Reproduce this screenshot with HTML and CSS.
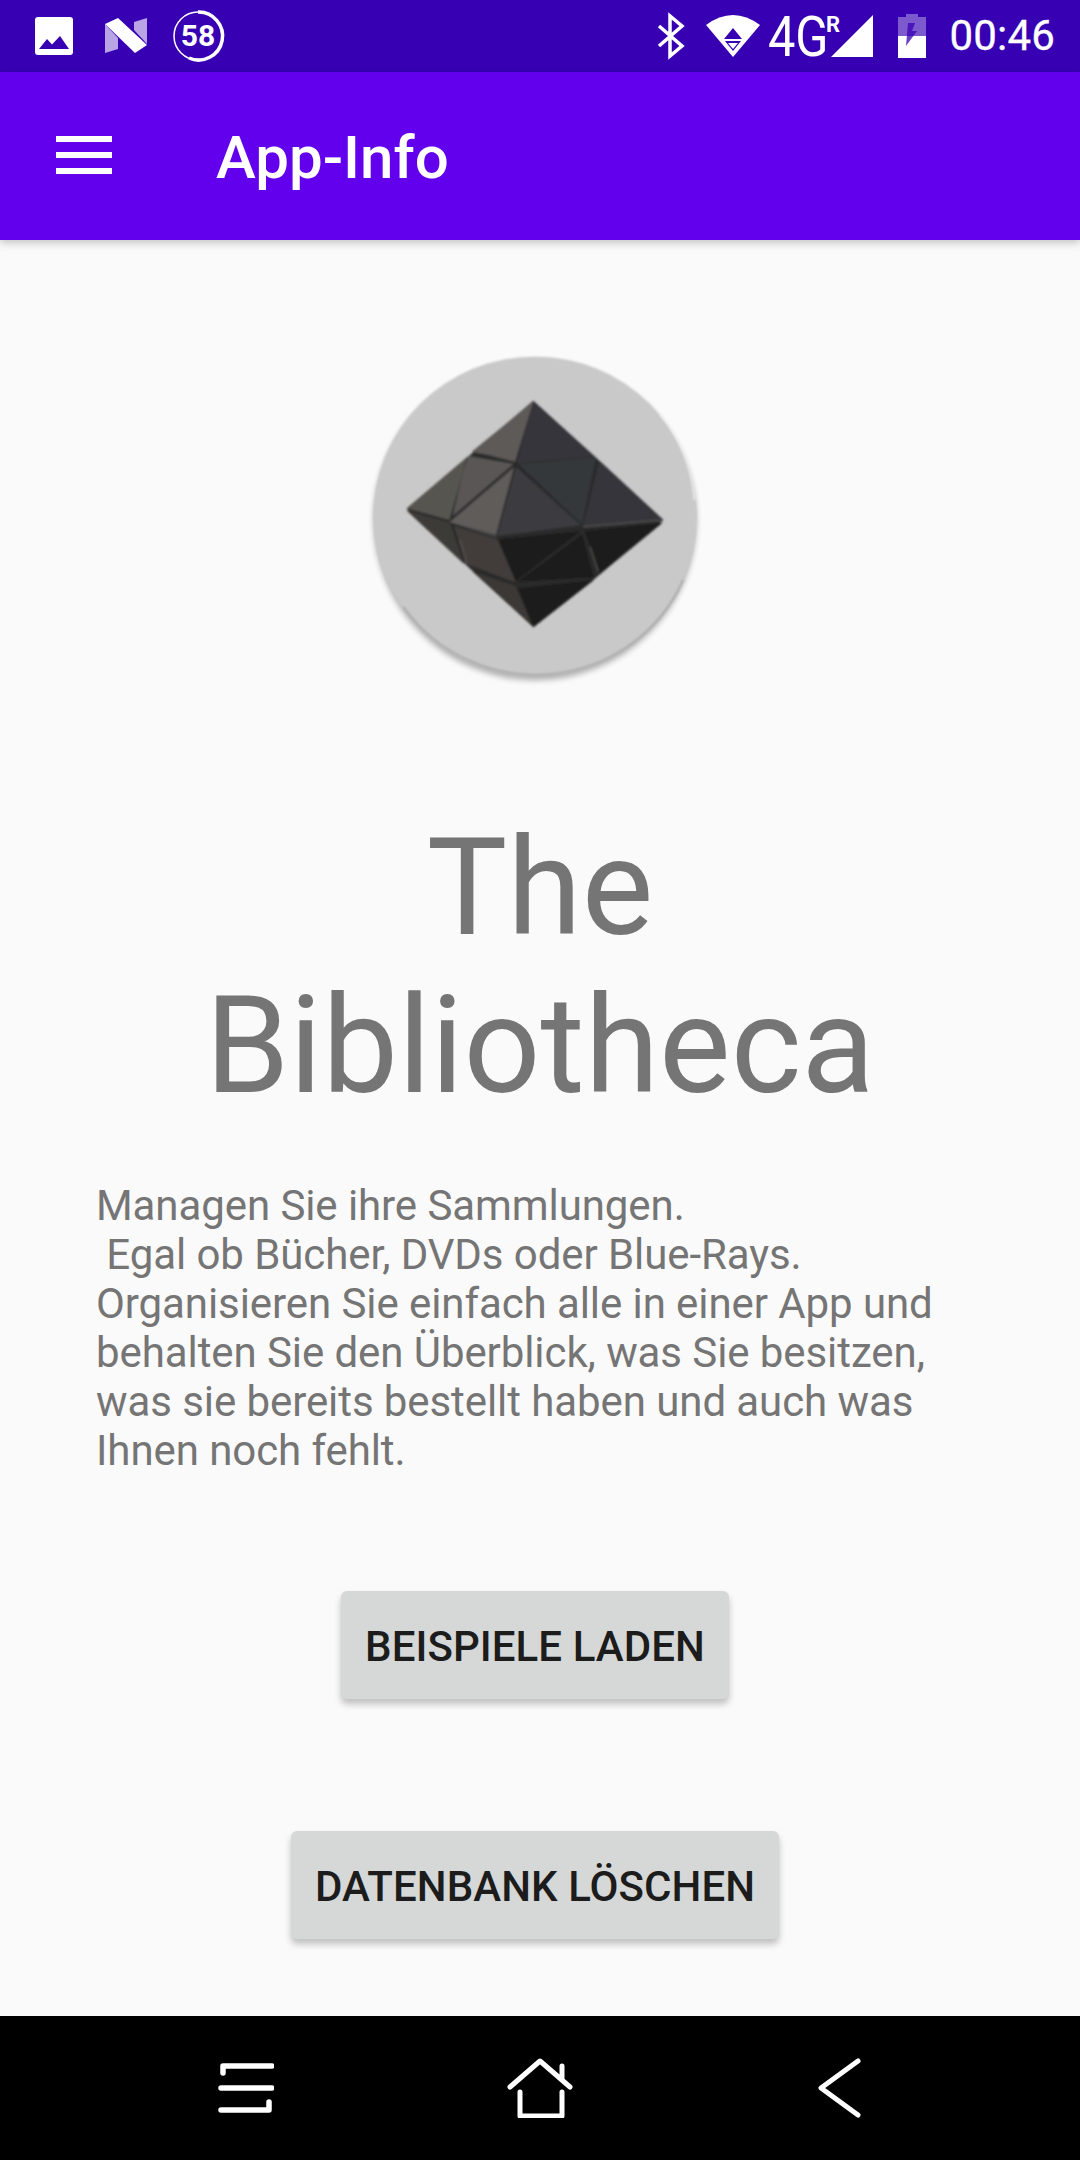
FILE: index.html
```html
<!DOCTYPE html>
<html lang="de">
<head>
<meta charset="utf-8">
<title>App-Info</title>
<link rel="stylesheet" href="styles.css">
</head>
<body>
<div class="screen">
  <header class="status">
    <div class="status-left">
      <svg class="si-image" viewBox="0 0 38 38"><rect width="38" height="38" rx="3" fill="#fff"/><path d="M4 32 L12 22 L17 27.5 L25 19 L34 32 Z" fill="#3700b3"/></svg>
      <svg class="si-n" viewBox="0 0 42 36"><path d="M0 6 L13 20 V31 L0 35 Z" fill="#b9a4e6"/><path d="M42 0 V26 L29 12 V4 Z" fill="#b9a4e6"/><path d="M0 6 L13 0 L42 27 L30 35 Z" fill="#fff"/></svg>
      <svg class="si-badge" viewBox="0 0 52 52"><circle cx="26" cy="26" r="24" fill="none" stroke="#fff" stroke-width="1.5"/><path d="M26 2 A24 24 0 1 1 17 48" fill="none" stroke="#fff" stroke-width="3.5"/><text x="26" y="36" text-anchor="middle" class="badge-text">58</text></svg>
    </div>
    <div class="status-right">
      <svg class="si-bt" viewBox="0 0 28 44"><path d="M2 12 L25 32 L13 42 V2 L25 12 L2 32" fill="none" stroke="#fff" stroke-width="3.5"/></svg>
      <svg class="si-wifi" viewBox="0 0 54 42"><path d="M0 10 Q27 -10 54 10 L27 42 Z" fill="#fff"/><path d="M27 13 L36 24 H18 Z M19 26 H35 L27 36 Z" fill="#3700b3"/><path d="M22 28 H32 L27 34 Z" fill="#fff"/></svg>
      <svg class="si-net" viewBox="0 0 105 44"><text transform="translate(0 42) scale(.87 1)" class="net-text">4G</text><text x="58" y="18" class="net-r">R</text><path d="M105 1 V43 H63 Z" fill="#fff"/></svg>
      <svg class="si-batt" viewBox="0 0 28 44"><path d="M8 0 H20 V3 H28 V44 H0 V3 H8 Z" fill="#fff" opacity=".35"/><path d="M0 22 H28 V44 H0 Z" fill="#fff"/><path d="M17 9 H10 L8 32 L19 17 H14 Z" fill="#3700b3" opacity=".75"/></svg>
      <span class="clock">00:46</span>
    </div>
  </header>

  <div class="appbar">
    <div class="burger"><span></span><span></span><span></span></div>
    <h1 class="appbar-title">App-Info</h1>
  </div>

  <main class="content">
    <svg class="logo" viewBox="0 0 1110 1050">
      <defs>
        <filter id="soft" x="-10%" y="-10%" width="120%" height="120%"><feGaussianBlur stdDeviation="3.5"/></filter>
        <filter id="shadow" x="-10%" y="-10%" width="120%" height="120%"><feGaussianBlur stdDeviation="10"/></filter>
      </defs>
      <ellipse cx="555" cy="542" rx="483" ry="478" fill="#000" opacity=".32" filter="url(#shadow)"/>
      <ellipse cx="555" cy="530" rx="485" ry="480" fill="#c9c9c9" filter="url(#soft)"/>
      <path d="M160 800 A485 480 0 0 0 1000 720" fill="none" stroke="#8a8a8a" stroke-width="5" opacity=".55" filter="url(#soft)"/>
      <path d="M930 220 A485 480 0 0 1 1034 480" fill="none" stroke="#f4f4f4" stroke-width="6" opacity=".8" filter="url(#soft)"/>
      <g filter="url(#soft)">
        <polygon points="550,182 735,350 940,540 730,720 550,862 370,695 170,508 360,345" fill="#2b2b2b"/>
        <polygon points="550,185 365,335 415,345 495,365" fill="#5d5a58"/>
        <polygon points="550,185 735,350 500,370" fill="#35363a"/>
        <polygon points="352,350 170,505 298,540 330,430" fill="#57544f"/>
        <polygon points="356,348 490,372 308,528 338,400" fill="#5a5755"/>
        <polygon points="492,382 438,585 300,545" fill="#5f5c5a"/>
        <polygon points="498,380 692,556 442,588" fill="#3a3b3f"/>
        <polygon points="505,372 738,352 696,552" fill="#36373b"/>
        <polygon points="748,362 940,540 698,562" fill="#34353a"/>
        <polygon points="170,512 342,672 300,548" fill="#3d3a37"/>
        <polygon points="312,558 442,598 497,727 350,672" fill="#423e3b"/>
        <polygon points="368,695 497,738 548,858" fill="#3a3734"/>
        <polygon points="550,862 732,720 503,745" fill="#1f1f1f"/>
        <polygon points="445,598 692,573 498,722" fill="#1c1c1c"/>
        <polygon points="503,725 697,583 732,712" fill="#1e1e1e"/>
        <polygon points="703,573 938,548 750,702" fill="#1f1f1f"/>
        <path d="M330 600 L350 670 M720 620 L745 695 M300 545 L440 590 M700 560 L935 540" fill="none" stroke="#6e6b68" stroke-width="3" opacity=".7"/>
      </g>
    </svg>
    <h2 class="title">The<br>Bibliotheca</h2>
    <p class="desc">Managen Sie ihre Sammlungen.<br>&nbsp;Egal ob Bücher, DVDs oder Blue-Rays.<br>Organisieren Sie einfach alle in einer App und behalten Sie den Überblick, was Sie besitzen, was sie bereits bestellt haben und auch was Ihnen noch fehlt.</p>
    <button class="btn btn-first">BEISPIELE LADEN</button>
    <button class="btn btn-second">DATENBANK LÖSCHEN</button>
  </main>

  <nav class="navbar">
    <svg class="nav-menu" viewBox="0 0 56 54"><path d="M5 12 V5 H54 M3 27 H54 M3 49 H51 V41" fill="none" stroke="#fff" stroke-width="5.5" stroke-linecap="round" stroke-linejoin="round"/></svg>
    <svg class="nav-home" viewBox="0 0 66 60"><path d="M3 29 L33 3 L63 29 M55 8 V21 M13 34 V58 H55 V34" fill="none" stroke="#fff" stroke-width="5" stroke-linecap="round" stroke-linejoin="round"/></svg>
    <svg class="nav-back" viewBox="0 0 44 60"><path d="M41 3 L4 30 L41 57" fill="none" stroke="#fff" stroke-width="5" stroke-linecap="round" stroke-linejoin="round"/></svg>
  </nav>
</div>
</body>
</html>
```

FILE: styles.css
```css
* { box-sizing: border-box; }
html, body { margin: 0; padding: 0; }
body { font-family: Roboto, "Liberation Sans", sans-serif; background: #fafafa; }
.screen { width: 1080px; height: 2160px; display: flex; flex-direction: column; overflow: hidden; }

.status { height: 72px; flex: none; background: #3700b3; display: flex; justify-content: space-between; align-items: center; }
.status-left { display: flex; align-items: center; padding-left: 35px; }
.status-right { display: flex; align-items: center; padding-right: 25px; }
.status svg { display: block; flex: none; overflow: visible; }
.si-image { width: 38px; height: 38px; }
.si-n { width: 42px; height: 36px; margin-left: 32px; }
.si-badge { width: 52px; height: 52px; margin-left: 25px; }
.badge-text { font: 700 30px Roboto, sans-serif; fill: #fff; }
.si-bt { width: 28px; height: 44px; }
.si-wifi { width: 54px; height: 42px; margin-left: 21px; }
.si-net { width: 105px; height: 44px; margin-left: 8px; }
.net-text { font: 400 56px Roboto, sans-serif; fill: #fff; }
.net-r { font: 700 22px Roboto, sans-serif; fill: #fff; }
.si-batt { width: 28px; height: 44px; margin-left: 25px; }
.clock { margin-left: 23px; color: #fff; font-size: 42px; line-height: 48px; letter-spacing: .2px; -webkit-text-stroke: .3px #fff; }

.appbar { height: 168px; flex: none; background: #6200ee; display: flex; align-items: center; padding-left: 56px; box-shadow: 0 3px 8px rgba(0,0,0,.22); position: relative; z-index: 1; }
.burger { width: 56px; margin-top: -2px; display: flex; flex-direction: column; gap: 10px; }
.burger span { display: block; height: 6px; background: #fff; }
.appbar-title { margin: 3px 0 0 104px; color: #fff; font-size: 60px; font-weight: 500; line-height: 70px; }

.content { flex: 1; min-height: 0; display: flex; flex-direction: column; align-items: center; padding-top: 100px; }
.logo { width: 370px; height: 350px; flex: none; margin-left: -10px; }
.title { margin: 119px 0 0; width: 100%; text-align: center; color: #757575; font-size: 135px; font-weight: 400; line-height: 158px; }
.desc { margin: 56px 0 0; width: 100%; padding: 0 96px; color: #757575; font-size: 42px; line-height: 49px; letter-spacing: -.08px; }
.btn { display: block; flex: none; height: 108px; margin-left: -10px; padding: 2px 24px 0; border: 0; border-radius: 6px; background: #d6d7d7; color: #1c1c1c; font-family: Roboto, sans-serif; font-size: 42px; font-weight: 500; letter-spacing: .07px; box-shadow: 0 5px 7px rgba(0,0,0,.24); }
.btn-first { margin-top: 116px; }
.btn-second { margin-top: 132px; }

.navbar { height: 144px; flex: none; background: #000; display: flex; align-items: center; padding-left: 218px; }
.navbar svg { display: block; flex: none; }
.nav-menu { width: 56px; height: 54px; }
.nav-home { width: 66px; height: 60px; margin-left: 233px; }
.nav-back { width: 44px; height: 60px; margin-left: 244px; }
```
